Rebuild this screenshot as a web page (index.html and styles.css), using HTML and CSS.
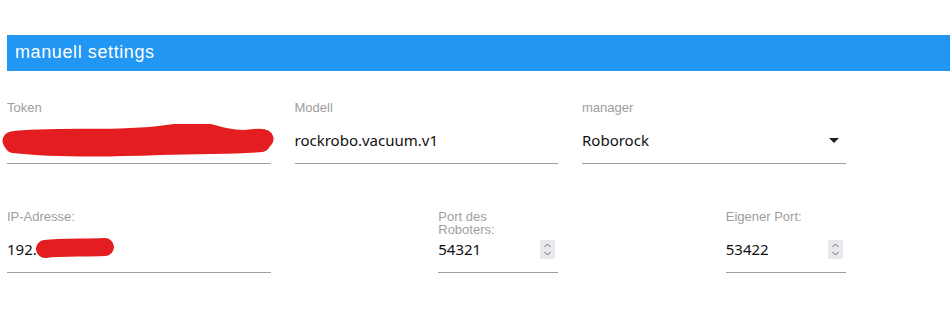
FILE: index.html
```html
<!DOCTYPE html>
<html lang="de">
<head>
  <meta charset="UTF-8">
  <meta name="viewport" content="width=device-width, initial-scale=1.0">
  <title>manuell settings</title>
  <link rel="stylesheet" href="styles.css">
</head>
<body>
  <div class="page">
    <div class="section-title">manuell settings</div>

    <div class="row row-three">
      <div class="field">
        <label class="field-label">Token</label>
        <div class="field-value redacted">
          <svg class="scribble scribble-token" width="278" height="36" viewBox="0 0 278 36">
            <path d="M12,17 C40,13 80,15 120,14 S165,11 185,8 S215,13 235,15 S258,12 264,15" fill="none" stroke="#e41e20" stroke-width="19" stroke-linecap="round" stroke-linejoin="round"/>
            <path d="M13,21 C60,26 110,25 160,23 S230,23 262,20" fill="none" stroke="#e41e20" stroke-width="16" stroke-linecap="round"/>
          </svg>
        </div>
      </div>
      <div class="field">
        <label class="field-label">Modell</label>
        <div class="field-value">rockrobo.vacuum.v1</div>
      </div>
      <div class="field">
        <label class="field-label">manager</label>
        <div class="field-value select">
          <span>Roborock</span>
          <svg class="caret" width="10" height="5" viewBox="0 0 10 5"><path d="M0,0 L10,0 L5,5 Z" fill="#212121"/></svg>
        </div>
      </div>
    </div>

    <div class="row row-six">
      <div class="field span-two">
        <label class="field-label">IP-Adresse:</label>
        <div class="field-value redacted">
          <span>192.</span>
          <svg class="scribble scribble-ip" width="80" height="26" viewBox="0 0 80 26">
            <path d="M9,13 C25,11 45,12 69,11" fill="none" stroke="#e41e20" stroke-width="18" stroke-linecap="round"/>
          </svg>
        </div>
      </div>
      <div class="field col-four">
        <label class="field-label">Port des Roboters:</label>
        <div class="field-value number">
          <span>54321</span>
          <span class="spinner">
            <svg width="15" height="19" viewBox="0 0 15 19"><path d="M4.5,7 L7.5,4 L10.5,7 M4.5,12 L7.5,15 L10.5,12" fill="none" stroke="#6d6d6d" stroke-width="1"/></svg>
          </span>
        </div>
      </div>
      <div class="field col-six">
        <label class="field-label">Eigener Port:</label>
        <div class="field-value number">
          <span>53422</span>
          <span class="spinner">
            <svg width="15" height="19" viewBox="0 0 15 19"><path d="M4.5,7 L7.5,4 L10.5,7 M4.5,12 L7.5,15 L10.5,12" fill="none" stroke="#6d6d6d" stroke-width="1"/></svg>
          </span>
        </div>
      </div>
    </div>
  </div>
</body>
</html>
```

FILE: styles.css
```css
body {
  margin: 0;
  background-color: #fff;
  font-family: "Liberation Sans", Arial, sans-serif;
}
.page {
  padding: 35px 0 0 7px;
}
.section-title {
  height: 36px;
  line-height: 35px;
  padding-left: 8px;
  background-color: #2196f3;
  color: #fff;
  font-size: 18px;
  letter-spacing: 0.6px;
}
.row {
  display: grid;
  column-gap: 24px;
}
.row-three {
  grid-template-columns: repeat(3, 263.5px);
  margin-top: 29px;
}
.row-six {
  grid-template-columns: repeat(6, 119.75px);
  margin-top: 45px;
}
.span-two {
  grid-column: 1 / 3;
}
.col-four {
  grid-column: 4;
}
.col-six {
  grid-column: 6;
}
.field {
  display: flex;
  flex-direction: column;
}
.field-label {
  height: 19px;
  max-width: 80%;
  font-size: 13px;
  line-height: 13px;
  padding-top: 1px;
  box-sizing: border-box;
  color: #9e9e9e;
}
.field-value {
  position: relative;
  display: flex;
  align-items: center;
  justify-content: space-between;
  height: 45px;
  box-sizing: border-box;
  border-bottom: 1px solid #9e9e9e;
  font-family: "Noto Sans", "Open Sans", sans-serif;
  font-size: 15px;
  color: #111;
  padding-bottom: 2px;
}
.select .caret {
  margin-right: 7px;
}
.number .spinner {
  display: flex;
  margin-right: 3px;
  background-color: #e9e9ed;
}
.scribble {
  position: absolute;
}
.scribble-token {
  left: -7px;
  top: 5px;
}
.scribble-ip {
  left: 29px;
  top: 8px;
}
```
